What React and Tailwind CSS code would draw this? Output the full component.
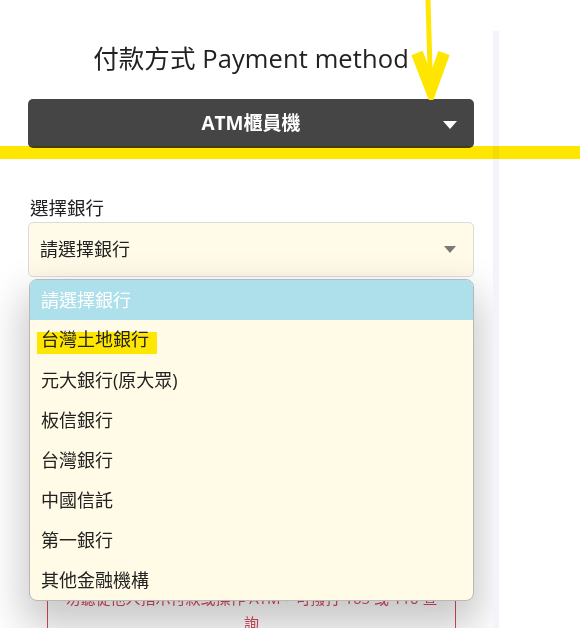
import React from 'react';

const banks = ['台灣土地銀行', '元大銀行(原大眾)', '板信銀行', '台灣銀行', '中國信託', '第一銀行', '其他金融機構'];

function Caret({ className }) {
  return (
    <svg viewBox="0 0 14 8" className={className}>
      <path d="M0 0 H14 L7 8 Z" fill="currentColor" />
    </svg>
  );
}

export default function App() {
  return (
    <div className="relative w-[580px] h-[628px] bg-white overflow-hidden font-['Open_Sans','Noto_Sans_CJK_TC',sans-serif] text-[#222]">
      <div className="flex h-full">
        {/* main panel */}
        <div className="relative w-[493px] h-full overflow-hidden">
          <div className="flex flex-col items-start pl-[28px] pt-[41px]">
            <h2 className="w-[446px] text-center text-[25.5px] leading-[34px] tracking-[0.1px]">付款方式 Payment method</h2>

            <div className="relative mt-[24px] w-[446px] h-[49px] rounded-[5px] bg-[#454545] flex items-center justify-center text-white font-bold text-[19px]">
              ATM櫃員機
              <Caret className="absolute right-[17px] top-[22px] w-[14px] h-[8px] text-white" />
            </div>

            <div className="mt-[46px] text-[18.5px] leading-[27px] pl-[2px]">選擇銀行</div>

            <div className="mt-[1px] w-[446px] h-[55px] rounded-[5px] border border-[#dcdcdc] bg-[#fffbe8] flex items-center justify-between pl-[11px] pr-[17px] text-[18px]">
              <span>請選擇銀行</span>
              <Caret className="w-[12px] h-[7px] text-[#7a7a7a]" />
            </div>

            {/* notice box, mostly under the open list */}
            <div className="mt-[296px] ml-[19px] w-[409px] border border-[#d9475c] px-3 pt-[12px] pb-[12px] text-center text-[15px] leading-[25px] text-[#d9475c]">
              勿聽從他人指示付款或操作 ATM，可撥打 165 或 110 查<br />詢
            </div>
          </div>

          {/* open list */}
          <div className="absolute left-[29px] top-[279px] w-[445px] flex flex-col rounded-[8px] border border-[#b8b8b8] bg-[#fffbe7] overflow-hidden shadow-[0_20px_40px_6px_rgba(0,0,0,0.22)] text-[18px]">
            <div className="h-[40px] flex items-center pl-[11px] bg-[#ade0ea] text-white">請選擇銀行</div>
            {banks.map((b, i) => (
              <div key={b} className="h-[40px] flex items-center pl-[11px]">
                <span className={i === 0 ? 'pb-[1px] bg-[linear-gradient(transparent_22%,#ffe600_22%)] -ml-[4px] pl-[4px] pr-[8px]' : ''}>{b}</span>
              </div>
            ))}
          </div>
        </div>

        {/* right gutter */}
        <div className="mt-[31px] w-[6px] bg-[#f3f4f9]"></div>
      </div>

      {/* yellow annotations */}
      <div className="absolute left-0 top-[146px] w-[580px] h-[13px] bg-[#ffe600] mix-blend-multiply"></div>
      <svg className="absolute left-[405px] top-0 w-[50px] h-[100px]" viewBox="0 0 50 100">
        <path d="M23 0 L25.5 86" stroke="#ffe600" strokeWidth="5" fill="none" />
        <path d="M12 53 L26 89 L39 53" stroke="#ffe600" strokeWidth="12" fill="none" strokeLinejoin="miter" />
      </svg>
    </div>
  );
}
